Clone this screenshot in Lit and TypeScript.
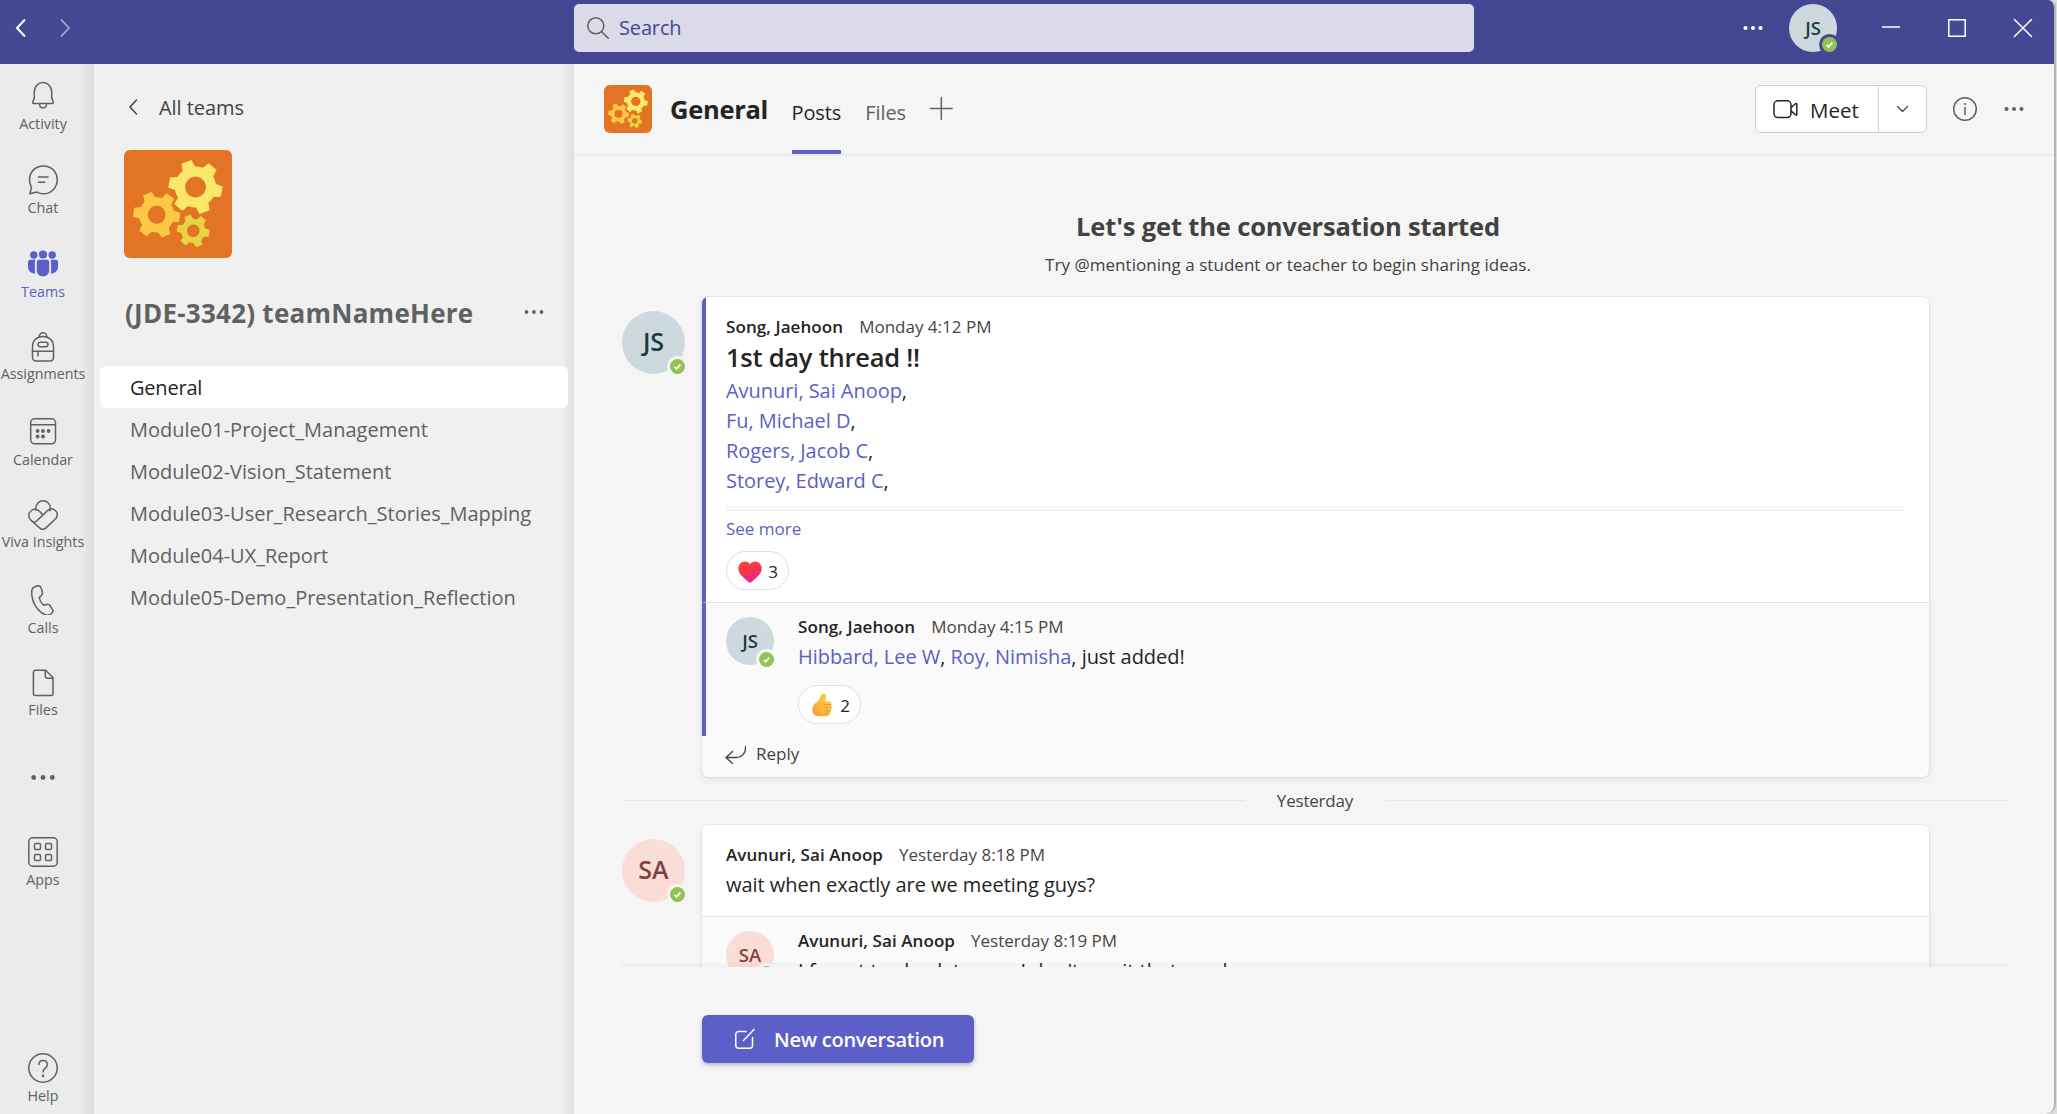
import { LitElement, html, css, svg, nothing, TemplateResult } from "lit";
import { customElement, property } from "lit/decorators.js";
import { classMap } from "lit/directives/class-map.js";

const gear = (cx: number, cy: number, r: number, body: number, hole: number, tooth: number, turn: number, fill: string) => svg`
  <g transform="translate(${cx} ${cy}) rotate(${turn})">
    ${[0, 60, 120, 180, 240, 300].map(
      (a) => svg`<path d="M${body - 2} ${-tooth * 0.62}L${r} ${-tooth * 0.48}V${tooth * 0.48}L${body - 2} ${tooth * 0.62}Z" fill=${fill} transform="rotate(${a})"/>`,
    )}
    <circle r=${(body + hole) / 2} fill="none" stroke=${fill} stroke-width=${body - hole}/>
  </g>`;

@customElement("team-picture")
export class TeamPicture extends LitElement {
  static styles = css`
    :host { display: block; }
    svg { display: block; width: 100%; height: 100%; border-radius: 6px; background: #e27426; }
  `;
  render() {
    return html`<svg viewBox="0 0 108 108">
      ${gear(71.5, 37, 26.7, 20.5, 10.5, 11, 10, "#fbe869")}
      ${gear(32.7, 64.8, 23.2, 17.6, 9, 9.6, 6, "#fdc843")}
      ${gear(69.3, 80.8, 16.2, 12, 6.3, 7, 9, "#e8d340")}
    </svg>`;
  }
}

@customElement("user-avatar")
export class UserAvatar extends LitElement {
  @property() initials = "";
  @property() size = "large";
  static styles = css`
    :host { display: block; flex: none; }
    .face {
      box-sizing: border-box; padding-bottom: 2px;
      position: relative; display: flex; align-items: center; justify-content: center;
      border-radius: 50%; font-weight: 650; background: #ced9de; color: #1b3a42;
    }
    .SA { background: #fbddd8; color: #84403a; }
    .large { width: 63px; height: 63px; font-size: 25px; }
    .medium { width: 48px; height: 48px; font-size: 18.5px; }
    .small { width: 48px; height: 48px; font-size: 18.5px; }
    .badge {
      position: absolute; right: 0; bottom: 0; width: 15px; height: 15px; border-radius: 50%;
      background: #92c353; box-shadow: 0 0 0 3px var(--ring, #f5f5f5);
    }
    .small .badge { bottom: -2px; }
    .badge svg { display: block; width: 15px; height: 15px; }
  `;
  render() {
    return html`<div class="face ${this.size} ${this.initials}">
      ${this.initials}
      <span class="badge"><svg viewBox="0 0 15 15" fill="none" stroke="#fff" stroke-width="1.7"><path d="M4.7 7.9 6.6 9.8 10.4 5.6"/></svg></span>
    </div>`;
  }
}

const icon = (body: TemplateResult, w = 30, h = 30) =>
  html`<svg class="icon" width=${w} height=${h} viewBox="0 0 ${w} ${h}" fill="none" stroke="currentColor" stroke-width="1.5" stroke-linejoin="round" stroke-linecap="round">${body}</svg>`;

const dots = (gap: number, r: number, y = 15) =>
  icon(svg`<g fill="currentColor" stroke="none"><circle cx=${15 - gap} cy=${y} r=${r}/><circle cx="15" cy=${y} r=${r}/><circle cx=${15 + gap} cy=${y} r=${r}/></g>`);

const shapes = {
  bell: svg`<path d="M6.1 22.6c-1 0-1.7-.7-1.4-1.6l1.6-3.9v-6.4C6.3 5.6 10.2 1.6 15 1.6s8.700 4 8.700 9.100v6.400l1.600 3.900c.3.900-.4 1.600-1.400 1.600z"/><path d="M11.500 23c0 2.200 1.500 3.900 3.500 3.900s3.500-1.700 3.500-3.900"/>`,
  chat: svg`<path d="M15.400.9C23.300.9 29.200 6.900 29.200 14.700S23.200 28.800 15.400 28.800c-2.500 0-4.600-.6-6.500-1.700l-7 1.700 1.600-6.500C2.300 20 1.500 17.600 1.500 14.700 1.500 6.900 7.600.9 15.400.9z"/><path d="M10.400 12h9.600M10.400 17.300h6.400"/>`,
  teams: svg`<g fill="currentColor" stroke="none"><circle cx="5.800" cy="6" r="3.700"/><circle cx="15" cy="5.500" r="4.100"/><circle cx="24.200" cy="6" r="3.700"/><path d="M2.300 10.700h5.300c-.6.700-.7 1.400-.7 2.200v9c0 .9.200 1.800.5 2.700C3.500 24.700 0 22 0 17.800V13c0-1.300 1-2.300 2.300-2.300z"/><path d="M27.700 10.700h-5.300c.6.700.7 1.400.7 2.200v9c0 .9-.2 1.800-.5 2.700 3.900.1 7.400-2.600 7.400-6.800V13c0-1.300-1-2.300-2.300-2.300z"/><path d="M11.100 10.700h7.800c1.300 0 2.300 1 2.300 2.300v8.200c0 3.500-2.700 6.200-6.200 6.200s-6.200-2.700-6.200-6.200V13c0-1.300 1-2.300 2.300-2.300z"/></g>`,
  bag: svg`<path d="M4.500 14.500C4.500 8.600 8.800 4.500 15 4.500s10.500 4.100 10.500 10v11c0 1.900-1.500 3.400-3.400 3.400H7.900c-1.900 0-3.400-1.500-3.400-3.400z"/><path d="M11.200 4.900C11.200 2.600 12.800.8 15 .8s3.800 1.800 3.800 4.100M4.500 19.300h21M10 19.500v4.300"/><rect x="10" y="10.300" width="10" height="4.400" rx="2.200"/>`,
  calendar: svg`<rect x="2.700" y="1.800" width="24.800" height="25" rx="4"/><path d="M2.900 7.700h24.400"/><g fill="currentColor" stroke="none"><circle cx="9.600" cy="14" r="1.900"/><circle cx="15" cy="14" r="1.900"/><circle cx="20.600" cy="14" r="1.900"/><circle cx="9.600" cy="19.500" r="1.900"/><circle cx="15" cy="19.500" r="1.900"/></g>`,
  viva: svg`<path d="M7.800 10.200V8.300c0-4.200 3.200-7.500 7.300-7.500s7.300 3.300 7.300 7.500c0 1-.2 1.900-.5 2.600"/><path d="M8.300 9.500c-3.900-.9-7.500 2.200-7.500 6 0 1.700.6 3.100 1.800 4.300l9.300 8.300c1.700 1.500 4.100 1.500 5.800 0l9.600-9.100c3-2.800 2.500-7.600-1.100-9.400-2.400-1.200-5-.8-6.900 1.100L8.400 21.300c-1.700 1.500-4 1-5.800-1.500M8.300 9.500c1.200.2 2.300.8 3.200 1.700l3.500 4"/>`,
  phone: svg`<path d="M6.800 1.800 9 1c1.800-.6 3.500.2 4.100 2l1.200 3.700c.4 1.400.1 2.800-.9 3.800l-2.200 2.100c.7 3.100 2 5.600 4.300 7.700l2.900-.8c1.400-.4 2.800.1 3.700 1.300l2.100 3c1 1.500.8 3.300-.5 4.400l-.9.800c-1.600 1.300-3.600 1.600-5.500.8C9.200 26.300 3.700 17.200 3.700 6.900c.1-2.500 1.200-4.400 3.100-5.100z"/>`,
  file: svg`<path d="M7.700 2.200h10l7.300 7.500v15.600c0 1.300-1 2.300-2.300 2.300h-15c-1.300 0-2.300-1-2.300-2.300V4.500c0-1.300 1-2.300 2.300-2.300z"/><path d="M17.300 2.300v5.800c0 1.300 1 2.200 2.300 2.200H25"/>`,
  apps: svg`<rect x=".8" y=".8" width="28.400" height="28.400" rx="4"/><rect x="6.500" y="6.500" width="6" height="6" rx="1.300"/><rect x="17.500" y="6.500" width="6" height="6" rx="1.300"/><rect x="6.500" y="17.500" width="6" height="6" rx="1.300"/><rect x="17.500" y="17.500" width="6" height="6" rx="1.300"/>`,
  help: svg`<circle cx="15" cy="15" r="14.200"/><path d="M10.900 11.500c0-2.500 1.800-4.100 4.200-4.100s4.200 1.600 4.200 4c0 3.600-4.300 4.300-4.300 7.500"/><circle cx="15" cy="22.900" r="1.300" fill="currentColor" stroke="none"/>`,
};

const rail = [
  { label: "Activity", shape: icon(shapes.bell), tall: 0 },
  { label: "Chat", shape: icon(shapes.chat), tall: 0 },
  { label: "Teams", shape: icon(shapes.teams), tall: -1, active: true },
  { label: "Assignments", shape: icon(shapes.bag), tall: 1 },
  { label: "Calendar", shape: icon(shapes.calendar), tall: -1 },
  { label: "Viva Insights", shape: icon(shapes.viva), tall: 1 },
  { label: "Calls", shape: icon(shapes.phone), tall: -1 },
  { label: "Files", shape: icon(shapes.file), tall: 1 },
  { label: "", shape: dots(9.3, 2.4, 24.5), tall: 0 },
  { label: "Apps", shape: icon(shapes.apps), tall: 0 },
];

const channels = [
  "General",
  "Module01-Project_Management",
  "Module02-Vision_Statement",
  "Module03-User_Research_Stories_Mapping",
  "Module04-UX_Report",
  "Module05-Demo_Presentation_Reflection",
];

const heart = html`<svg width="24" height="22" viewBox="0 0 24 22"><defs><linearGradient id="h" x1="0.2" y1="0" x2="0.6" y2="1"><stop offset="0" stop-color="#fb4440"/><stop offset=".5" stop-color="#f8324f"/><stop offset="1" stop-color="#e2259f"/></linearGradient></defs><path d="M12 3.200C9.800-.3 4.200-.4 1.600 3.200-.8 6.800.4 11 3.200 14.200c2.200 2.500 4.800 4.700 7.200 6.700 1 .8 2.200.8 3.200 0 2.400-2 5-4.200 7.200-6.700 2.800-3.200 4-7.400 1.600-11C19.800-.4 14.200-.3 12 3.200z" fill="url(#h)"/><path d="M12 3.400v5" stroke="#d9264d" stroke-width=".8"/></svg>`;
const thumb = html`<svg width="20" height="24" viewBox="0 0 20 24"><defs><linearGradient id="t" x1="1" y1="0.200" x2="0" y2="1"><stop offset="0" stop-color="#fdd13f"/><stop offset=".6" stop-color="#fdb53a"/><stop offset="1" stop-color="#f08a4b"/></linearGradient></defs><path d="M10.200.9c1.900-1 3.900.3 3.900 2.700 0 1.800-.7 3.400-1.200 5h4.200c1.700 0 2.600 1.200 2.100 2.700.9.800.9 2.300.1 3.200.6 1 .4 2.300-.5 3.100.4 1.300-.3 2.600-1.400 3-.1 1.600-1.200 2.600-2.900 2.600H7.200C2.800 23.200.3 20.400.3 16.700c0-3.500 2-5.500 4.500-7.600C7.200 7 8.100 5.300 8.600 2.700c.2-.9.700-1.400 1.600-1.800z" fill="url(#t)"/><path d="M12 11.500h7M12.300 14.700h7M12.200 17.800h6.400M12 20.700h5.200" stroke="#e58a2e" stroke-width=".8"/></svg>`;

@customElement("app-root")
export class AppRoot extends LitElement {
  static styles = css`
    :host {
      display: block; width: 2057px; height: 1114px; overflow: hidden; background: #dcdcdc;
      font-family: "Open Sans", "Noto Sans", sans-serif; font-size: 20px; color: #252423;
    }
    * { box-sizing: border-box; }
    svg { display: block; flex: none; }
    .window {
      display: grid; grid-template: 64px 1fr / 94px 480px 1fr; width: 2056px; height: 1114px;
      border-right: 2px solid #b5b5b5; border-radius: 0 8px 10px 0; overflow: hidden; background: #f5f5f5;
    }
    .top {
      grid-column: 1 / -1; display: flex; align-items: flex-start; background: #444791; color: #fff;
      padding-top: 4px; height: 64px;
    }
    .nav { display: flex; width: 574px; padding: 9px 0 0 6px; gap: 14px; }
    .fwd { opacity: .55; }
    .search {
      display: flex; align-items: center; width: 900px; height: 48px; border-radius: 5px; background: #dbdae8;
      color: #444791; padding-left: 13px; gap: 10px; line-height: 50px; letter-spacing: -.15px;
    }
    .search .icon { color: #616161; }
    .controls { display: flex; align-items: center; height: 48px; }
    .person { margin-left: auto; }
    .controls user-avatar { margin: 0 39px 0 21px; --ring: #444791; }
    .controls .icon + .icon { margin-left: 36px; }
    .right { padding-right: 16px; }

    .rail {
      display: flex; flex-direction: column; font-size: 14.300px; line-height: 20px; color: #616161;
      background: linear-gradient(90deg, #ebebeb 82px, #e4e4e4 86px, #dcdcdc 94px);
    }
    .app { display: flex; flex-direction: column; align-items: center; width: 86px; padding-top: 17px; height: 84px; white-space: nowrap; }
    .app.short { height: 83px; }
    .app.long { height: 85px; }
    .app .name { margin-top: 3px; }
    .app.long .name { margin-top: 2px; }
    .app.active { color: #5b5fc7; }
    .app.help { margin: auto 0 -6px; height: 84px; }

    .side { background: linear-gradient(90deg, #f0f0f0 468px, #e9e9e9 472px, #e0e0e0 480px); padding: 30px 6px 0; }
    .back { display: flex; align-items: center; gap: 12px; padding-left: 23px; line-height: 28px; color: #424242; letter-spacing: -.05px; }
    .pic { width: 108px; height: 108px; margin: 28px 0 37px 24px; }
    .team { display: flex; align-items: center; justify-content: space-between; padding: 0 19px 0 25px; margin-bottom: 35px; line-height: 36px; font-weight: 700; font-size: 26px; letter-spacing: .25px; color: #616161; }
    .channel { height: 42px; padding: 2px 0 0 30px; line-height: 40px; color: #616161; border-radius: 6px; white-space: nowrap; }
    .channel.on { background: #fff; color: #252423; letter-spacing: -.2px; }

    .main { display: flex; flex-direction: column; min-width: 0; min-height: 0; }
    .head { display: flex; align-items: center; height: 92px; border-bottom: 2px solid #ebebeb; padding: 0 25px 0 30px; flex: none; }
    .head team-picture { width: 48px; height: 48px; margin-right: 18px; }
    .head h1 { margin: 0; width: 121.500px; font-size: 25.500px; line-height: 36px; font-weight: 700; letter-spacing: -.3px; }
    .tab { height: 90px; padding-top: 35px; line-height: 28px; color: #616161; margin-right: 24px; letter-spacing: -.1px; }
    .tab.on { color: #252423; font-weight: 500; border-bottom: 4px solid #5b5fc7; }
    .plus { color: #616161; }
    .meet { display: flex; margin-left: auto; height: 48px; border: 1.500px solid #d1d1d1; border-radius: 6px; background: #fff; margin-right: 23px; }
    .call { display: flex; align-items: center; gap: 10px; width: 123px; padding-left: 14px; border-right: 1px solid #d1d1d1; font-weight: 500; }
    .call span { font-size: 20.500px; padding-top: 1px; }
    .more { display: flex; align-items: center; justify-content: center; width: 47px; color: #424242; }
    .grey { color: #616161; }
    .head .grey + .grey { margin-left: 19px; }

    .feed { height: 811px; overflow: hidden; padding: 51.500px 46px 0 48px; flex: none; position: relative; }
    .fade { position: absolute; left: 48px; right: 46px; bottom: 0; height: 4px; background: rgba(0, 0, 0, .022); }
    .intro { text-align: center; padding-right: 54px; color: #424242; }
    .intro h2 { margin: 0 0 9px; font-size: 25.500px; line-height: 36px; font-weight: 700; letter-spacing: -.16px; }
    .intro p { margin: 0 0 20px; font-size: 17px; line-height: 24px; letter-spacing: .04px; }
    .thread { display: flex; align-items: flex-start; gap: 17px; }
    .thread > user-avatar { margin-top: 14px; }
    .card { width: 1227px; border-radius: 6px; background: #fafafa; box-shadow: 0 0 2px rgba(0, 0, 0, .16), 0 3px 8px rgba(0, 0, 0, .06); overflow: hidden; }
    .post { background: #fff; padding: 18px 24px 0; border-bottom: 1px solid #e5e5e5; height: 306px; }
    .post.brief { height: 92px; }
    .mark { border-left: 4px solid #5b5fc7; padding-left: 20px; }
    .by { display: flex; gap: 16px; font-size: 17px; line-height: 24px; color: #484644; white-space: nowrap; }
    .by b { font-weight: 600; color: #252423; letter-spacing: .08px; }
    .subject { font-size: 25.500px; line-height: 36px; font-weight: 600; margin-bottom: 1.500px; letter-spacing: -.25px; }
    .line { line-height: 30px; white-space: nowrap; letter-spacing: -.04px; }
    .gap { margin-top: 3px; }
    .at { color: #5b5fc7; }
    .rule { height: 5px; margin-top: 9.500px; background: #fafafa; border-bottom: 1px solid #f0f0f0; }
    .see { font-size: 17px; line-height: 24px; color: #5b5fc7; margin: 6.500px 0 10px; }
    .pill { display: flex; align-items: center; justify-content: space-between; width: 63px; height: 39px; border: 1.500px solid #e0e0e0; border-radius: 20px; background: #fff; padding: 2px 10px 0 11px; font-size: 17px; }
    .reply { display: flex; gap: 24px; height: 133px; padding: 12px 0 0 24px; }
    .reply.mark { padding-left: 20px; }
    .reply user-avatar { margin-top: 2.500px; --ring: #fafafa; }
    .reply .pill { margin-top: 13px; padding-left: 13px; }
    .answer { display: flex; align-items: center; gap: 10px; height: 41px; padding: 0 0 4px 22px; font-size: 17px; line-height: 24px; color: #424242; }
    .day { display: flex; align-items: center; gap: 32px; margin: 12px 0; font-size: 17px; line-height: 24px; color: #484644; letter-spacing: -.2px; }
    .day::before, .day::after { content: ""; flex: 1; height: 1px; background: #e8e8e8; }
    .new { display: flex; align-items: center; gap: 18px; width: 272px; height: 48px; margin: 48px 0 0 128px; padding-left: 32px; border-radius: 6px; background: #5b5fc7; color: #fff; font-weight: 600; letter-spacing: -.24px; box-shadow: 0 2px 4px rgba(0, 0, 0, .25); white-space: nowrap; }
  `;

  private by(name: string, time: string) {
    return html`<div class="by"><b>${name}</b><span>${time}</span></div>`;
  }

  private top() {
    return html`<header class="top">
      <div class="nav">
        ${icon(svg`<path d="M19 6.500 11 15l8 8.500" stroke-width="2" stroke-linecap="butt" stroke-linejoin="miter"/>`)}
        <span class="fwd">${icon(svg`<path d="M11 6.500 19 15l-8 8.500" stroke-width="1.700" stroke-linecap="butt" stroke-linejoin="miter"/>`)}</span>
      </div>
      <div class="search">${icon(svg`<circle cx="8.800" cy="8.800" r="8"/><path d="m14.700 14.700 7 7"/>`, 22, 22)}<span>Search</span></div>
      <div class="controls person">
        ${dots(7.5, 2.1)}<user-avatar initials="JS" size="medium"></user-avatar>
      </div>
      <div class="controls right">
        ${icon(svg`<path d="M6 14h18" stroke-linecap="butt"/>`)}${icon(svg`<rect x="6.800" y="6.800" width="16.400" height="16.400" stroke-linejoin="miter"/>`)}${icon(svg`<path d="m6.500 6.500 17 17M23.500 6.500l-17 17"/>`)}
      </div>
    </header>`;
  }

  render() {
    return html`<div class="window">
      ${this.top()}
      <nav class="rail">
        ${rail.map(
          (r) => html`<div class=${classMap({ app: true, active: !!r.active, short: r.tall < 0, long: r.tall > 0 })}>
            ${r.shape}${r.label ? html`<span class="name">${r.label}</span>` : nothing}
          </div>`,
        )}
        <div class="app help">${icon(shapes.help)}<span class="name">Help</span></div>
      </nav>
      <aside class="side">
        <div class="back">${icon(svg`<path d="m13.500 4-6.500 7 6.500 7"/>`, 24, 24)}<span>All teams</span></div>
        <team-picture class="pic"></team-picture>
        <div class="team"><span>(JDE-3342) teamNameHere</span>${dots(7.5, 1.9, 14)}</div>
        ${channels.map((c, i) => html`<div class=${classMap({ channel: true, on: i === 0 })}>${c}</div>`)}
      </aside>
      <main class="main">
        <div class="head">
          <team-picture></team-picture>
          <h1>General</h1>
          <span class="tab on">Posts</span><span class="tab">Files</span>
          <span class="plus">${icon(svg`<path d="M11.300.7v21.600M.5 11.500h21.600"/>`, 23, 24)}</span>
          <div class="meet">
            <div class="call">${icon(svg`<rect x="4" y="3.800" width="17" height="16.800" rx="4"/><path d="m21.300 10.500 4.200-3.700c.7-.6 1.300-.3 1.300.5v10c0 .8-.6 1.100-1.300.5l-4.200-3.700"/>`, 30, 24)}<span>Meet</span></div>
            <div class="more">${icon(svg`<path d="m1.500 4.500 5 5 5-5" stroke-width="1.200"/>`, 13, 14)}</div>
          </div>
          <span class="grey">${icon(svg`<circle cx="15" cy="15" r="11.300"/><path d="M15 13.500v7"/><circle cx="15" cy="10" r="1.100" fill="currentColor" stroke="none"/>`)}</span>
          <span class="grey">${dots(7.5, 2)}</span>
        </div>
        <section class="feed">
          <div class="intro">
            <h2>Let's get the conversation started</h2>
            <p>Try @mentioning a student or teacher to begin sharing ideas.</p>
          </div>
          <article class="thread">
            <user-avatar initials="JS"></user-avatar>
            <div class="card">
              <div class="post mark">
                ${this.by("Song, Jaehoon", "Monday 4:12 PM")}
                <div class="subject">1st day thread !!</div>
                ${["Avunuri, Sai Anoop", "Fu, Michael D", "Rogers, Jacob C", "Storey, Edward C"].map(
                  (n) => html`<div class="line"><span class="at">${n}</span>,</div>`,
                )}
                <div class="rule"></div>
                <div class="see">See more</div>
                <div class="pill">${heart}<span>3</span></div>
              </div>
              <div class="reply mark">
                <user-avatar initials="JS" size="small"></user-avatar>
                <div>
                  ${this.by("Song, Jaehoon", "Monday 4:15 PM")}
                  <div class="line gap"><span class="at">Hibbard, Lee W</span>, <span class="at">Roy, Nimisha</span>, just added!</div>
                  <div class="pill">${thumb}<span>2</span></div>
                </div>
              </div>
              <div class="answer">${icon(svg`<path d="M21.500 1.500c.5 6.500-3.300 11-9.500 11H2.500M8.500 6.500l-6.500 6 6.500 6" stroke-width="1.300"/>`, 22, 19)}<span>Reply</span></div>
            </div>
          </article>
          <div class="day">Yesterday</div>
          <article class="thread">
            <user-avatar initials="SA"></user-avatar>
            <div class="card">
              <div class="post brief">
                ${this.by("Avunuri, Sai Anoop", "Yesterday 8:18 PM")}
                <div class="line gap">wait when exactly are we meeting guys?</div>
              </div>
              <div class="reply">
                <user-avatar initials="SA" size="small"></user-avatar>
                <div>
                  ${this.by("Avunuri, Sai Anoop", "Yesterday 8:19 PM")}
                  <div class="line gap">I forgot to check teams, I don't use it that much</div>
                </div>
              </div>
            </div>
          </article>
          <div class="fade"></div>
        </section>
        <div class="new">${icon(svg`<path d="M12 3.500H4.800c-1.800 0-3 1.200-3 3v10.700c0 1.800 1.200 3 3 3h10.700c1.800 0 3-1.200 3-3V9.500M9.500 12.500 20 1.500"/>`, 22, 22)}<span>New conversation</span></div>
      </main>
    </div>`;
  }
}
